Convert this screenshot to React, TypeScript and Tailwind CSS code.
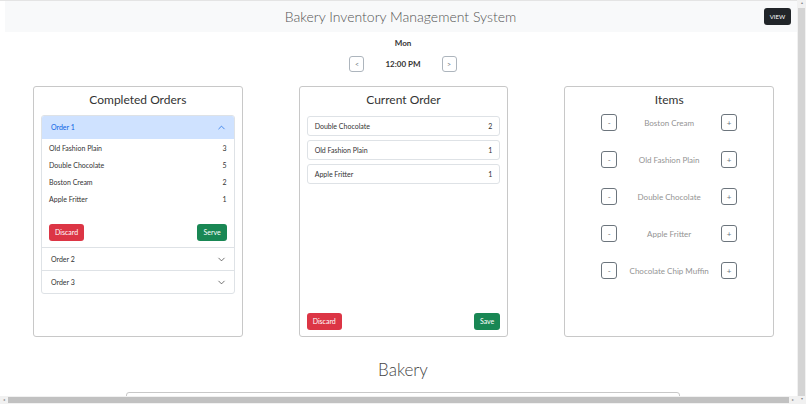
import { ChevronDown, ChevronUp } from "lucide-react";

const completed = [
  { name: "Old Fashion Plain", qty: 3 },
  { name: "Double Chocolate", qty: 5 },
  { name: "Boston Cream", qty: 2 },
  { name: "Apple Fritter", qty: 1 },
];

const current = [
  { name: "Double Chocolate", qty: 2 },
  { name: "Old Fashion Plain", qty: 1 },
  { name: "Apple Fritter", qty: 1 },
];

const items = [
  "Boston Cream",
  "Old Fashion Plain",
  "Double Chocolate",
  "Apple Fritter",
  "Chocolate Chip Muffin",
];

function SmallButton({ label }: { label: string }) {
  return (
    <button
      className="flex h-[17px] w-[16px] items-center justify-center rounded-[3px] border border-[#6c757d] bg-white text-[8px] leading-none text-[#6c757d]"
      type="button"
    >
      {label}
    </button>
  );
}

function Card({ title, children }: { title: string; children: React.ReactNode }) {
  return (
    <div className="pl-[33px] pr-[23px]">
      <div className="flex h-[251px] flex-col rounded-[3px] border border-[#c8c8c8] bg-white px-[7px]">
        <h2 className="pt-[3px] text-center text-[12px] leading-[20px] text-[#333]">{title}</h2>
        {children}
      </div>
    </div>
  );
}

export default function App() {
  return (
    <div
      className="flex h-[404px] w-[806px] overflow-hidden bg-white text-[#333]"
      style={{ fontFamily: 'Lato, "Open Sans", sans-serif' }}
    >
      <div className="flex min-w-0 flex-1 flex-col">
        <div className="min-h-0 flex-1 overflow-hidden">
          <div className="h-[1px] bg-[#e4e4e4]" />
          {/* header */}
          <div className="ml-[5px] flex h-[31px] items-center bg-[#f8f9fa]">
            <div className="flex-1" />
            <h1 className="ml-[5px] text-[14px] font-light text-[#555]">Bakery Inventory Management System</h1>
            <div className="flex flex-1 justify-end pr-[6px]">
              <button
                className="flex h-[17px] w-[27px] items-center justify-center rounded-[3px] bg-[#212529] text-[6px] text-white"
                type="button"
              >
                VIEW
              </button>
            </div>
          </div>

          {/* day / time */}
          <div className="pl-[9px]">
            <div className="mt-[6px] text-center text-[8px] font-bold leading-[10px] text-[#333]">Mon</div>
            <div className="mt-[8px] flex items-center justify-center">
              <button
                className="flex h-[16px] w-[15px] items-center justify-center rounded-[3px] border border-[#adb5bd] text-[7px] text-[#6c757d]"
                type="button"
              >
                &lt;
              </button>
              <span className="mx-[21px] text-[8px] font-bold text-[#333]">12:00 PM</span>
              <button
                className="flex h-[16px] w-[15px] items-center justify-center rounded-[3px] border border-[#adb5bd] text-[7px] text-[#6c757d]"
                type="button"
              >
                &gt;
              </button>
            </div>
          </div>

          {/* cards */}
          <div className="mt-[14px] grid grid-cols-3">
            <Card title="Completed Orders">
              <div className="mt-[5px] overflow-hidden rounded-[3px] border border-[#dee2e6]">
                <div className="flex h-[23px] items-center justify-between bg-[#cfe2ff] pl-[9px] pr-[7px] text-[7px] text-[#0c63e4]">
                  <span>Order 1</span>
                  <ChevronUp className="h-[11px] w-[11px]" strokeWidth={1.5} />
                </div>
                <div className="px-[7px] pt-[1px]">
                  {completed.map((c) => (
                    <div className="flex h-[17px] items-center justify-between text-[7px] text-[#333]" key={c.name}>
                      <span>{c.name}</span>
                      <span>{c.qty}</span>
                    </div>
                  ))}
                  <div className="mt-[16px] flex justify-between pb-[6px]">
                    <button className="h-[17px] rounded-[3px] bg-[#dc3545] px-[6px] text-[7px] text-white" type="button">
                      Discard
                    </button>
                    <button className="h-[17px] rounded-[3px] bg-[#198754] px-[6px] text-[7px] text-white" type="button">
                      Serve
                    </button>
                  </div>
                </div>
                {["Order 2", "Order 3"].map((o) => (
                  <div
                    className="flex h-[23px] items-center justify-between border-t border-[#dee2e6] pl-[9px] pr-[7px] text-[7px] text-[#333]"
                    key={o}
                  >
                    <span>{o}</span>
                    <ChevronDown className="h-[11px] w-[11px]" strokeWidth={1.5} />
                  </div>
                ))}
              </div>
            </Card>

            <Card title="Current Order">
              <div className="mt-[6px] flex flex-col gap-[4px]">
                {current.map((c) => (
                  <div
                    className="flex h-[20px] items-center justify-between rounded-[3px] border border-[#dee2e6] px-[7px] text-[7px] text-[#333]"
                    key={c.name}
                  >
                    <span>{c.name}</span>
                    <span>{c.qty}</span>
                  </div>
                ))}
              </div>
              <div className="mt-auto flex justify-between pb-[6px]">
                <button className="h-[17px] rounded-[3px] bg-[#dc3545] px-[6px] text-[7px] text-white" type="button">
                  Discard
                </button>
                <button className="h-[17px] rounded-[3px] bg-[#198754] px-[6px] text-[7px] text-white" type="button">
                  Save
                </button>
              </div>
            </Card>

            <Card title="Items">
              <div className="mt-[4px] flex flex-col gap-[20px] px-[29px]">
                {items.map((name) => (
                  <div className="flex items-center justify-between" key={name}>
                    <SmallButton label="-" />
                    <span className="text-[8px] text-[#939393]">{name}</span>
                    <SmallButton label="+" />
                  </div>
                ))}
              </div>
            </Card>
          </div>

          {/* bakery */}
          <h2 className="mt-[20px] pl-[9px] text-center text-[17px] font-light leading-[26px] text-[#444]">Bakery</h2>
          <div className="ml-[126px] mt-[9px] h-[20px] w-[554px] rounded-t-[3px] border border-[#c8c8c8]" />
        </div>
        {/* horizontal scrollbar */}
        <div className="flex h-[8px] items-center bg-[#f1f1f1]">
          <span className="w-[8px] text-center text-[4px] text-[#888]">◂</span>
          <div className="h-[6px] flex-1 bg-[#c1c1c1]" />
          <span className="w-[8px] text-center text-[4px] text-[#888]">▸</span>
        </div>
      </div>
      {/* vertical scrollbar */}
      <div className="flex w-[9px] flex-col items-center bg-[#f1f1f1]">
        <span className="h-[8px] text-[4px] text-[#888]">▴</span>
        <div className="w-[7px] flex-1 bg-[#d4d4d4]" />
        <span className="h-[8px] text-[4px] text-[#888]">▾</span>
      </div>
    </div>
  );
}
